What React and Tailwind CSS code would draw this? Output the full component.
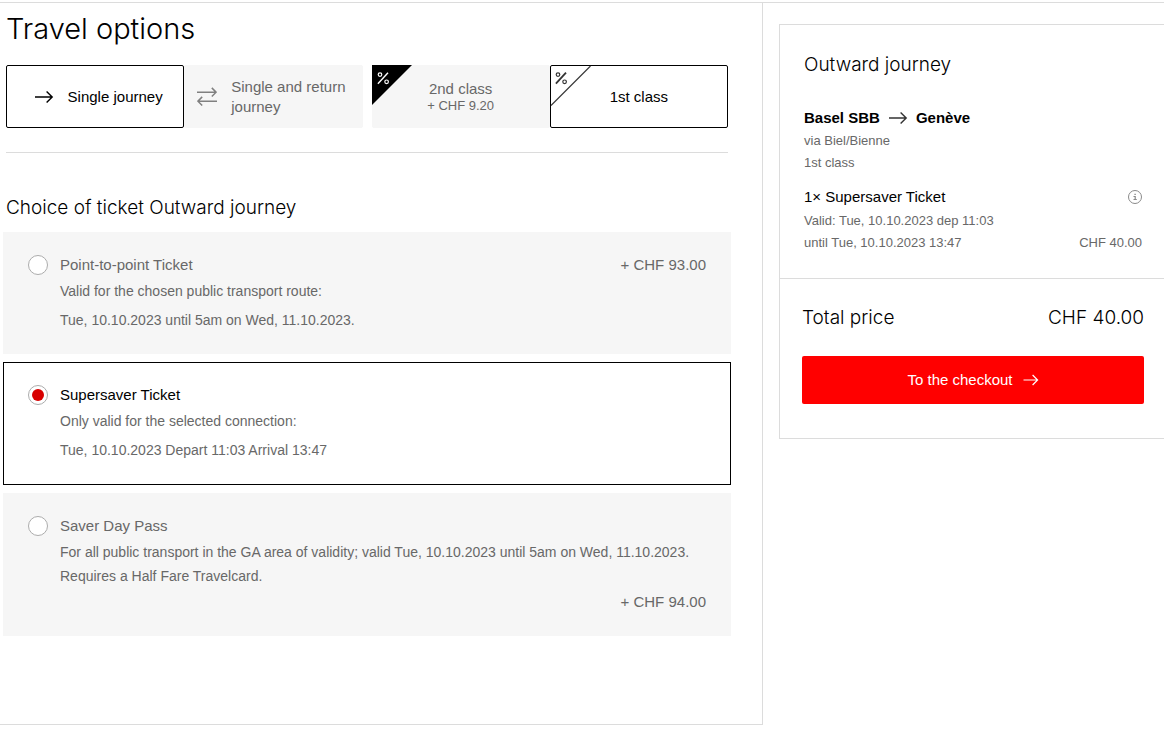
import { useState } from "react";

function ArrowRight({ className = "", strokeWidth = 1.4 }) {
  return (
    <svg className={className} width="20" height="16" viewBox="0 0 20 16" fill="none" stroke="currentColor" strokeWidth={strokeWidth} aria-hidden="true">
      <path d="M1 8H18.2M12.6 2.4L18.2 8L12.6 13.6" />
    </svg>
  );
}

function SwapArrows() {
  return (
    <svg className="shrink-0" width="20" height="20" viewBox="0 0 20 20" fill="none" stroke="#808080" strokeWidth="1.5" aria-hidden="true">
      <path d="M0 5.2H19M14.8 0.9L19.1 5.2L14.8 9.5" />
      <path d="M20 14.2H1M5.2 9.9L0.9 14.2L5.2 18.5" />
    </svg>
  );
}

function InfoIcon() {
  return (
    <svg width="16" height="16" viewBox="0 0 16 16" fill="none" stroke="#8a8a8a" strokeWidth="1" aria-hidden="true">
      <circle cx="9" cy="8" r="6.5" />
      <path d="M7.5 7.5H9.2V10.5M7.5 10.5H10.8M8.4 5.4H9.8" strokeWidth="1.2" />
    </svg>
  );
}

function PercentCorner({ solid }) {
  return (
    <svg className="absolute -left-px -top-px" width="41" height="41" viewBox="0 0 41 41" fill="none" aria-hidden="true">
      {solid ? <path d="M0 0H40L0 40Z" fill="#000" /> : <path d="M40.5 1L1 40.5" stroke="#333" strokeWidth="1.1" />}
      <g stroke={solid ? "#fff" : "#333"}>
        <path d="M16 7.7L5.9 18.7" strokeWidth={solid ? "1.4" : "1.8"} />
        <circle cx="8" cy="9.6" r="1.8" strokeWidth="1.2" />
        <circle cx="14.6" cy="16.8" r="1.8" strokeWidth="1.2" />
      </g>
    </svg>
  );
}

function Toggle({ selected, onClick, children }) {
  return (
    <button
      type="button"
      aria-pressed={selected}
      onClick={onClick}
      className={
        "relative flex h-[63px] flex-1 items-center rounded-xs border text-[15px] leading-5 " +
        (selected ? "border-black bg-white text-black" : "border-[#f6f6f6] bg-[#f6f6f6] text-[#686868]")
      }
    >
      {children}
    </button>
  );
}

const tickets = [
  {
    id: "point",
    name: "Point-to-point Ticket",
    price: "+ CHF 93.00",
    lines: ["Valid for the chosen public transport route:", "Tue, 10.10.2023 until 5am on Wed, 11.10.2023."],
  },
  {
    id: "supersaver",
    name: "Supersaver Ticket",
    lines: ["Only valid for the selected connection:", "Tue, 10.10.2023 Depart 11:03 Arrival 13:47"],
  },
  {
    id: "daypass",
    name: "Saver Day Pass",
    priceBelow: "+ CHF 94.00",
    lines: [
      "For all public transport in the GA area of validity; valid Tue, 10.10.2023 until 5am on Wed, 11.10.2023. Requires a Half Fare Travelcard.",
    ],
  },
];

function TicketCard({ ticket, selected, onSelect }) {
  return (
    <label
      htmlFor={ticket.id}
      className={
        "flex gap-3 border px-6 pt-5 " +
        (selected ? "border-black bg-white pb-[22px]" : "border-[#f6f6f6] bg-[#f6f6f6] pb-[21px]")
      }
    >
      <input
        id={ticket.id}
        type="radio"
        name="ticket"
        checked={selected}
        onChange={onSelect}
        className="mt-0.5 flex size-5 shrink-0 appearance-none items-center justify-center rounded-full border border-[#acacac] bg-white checked:before:size-3 checked:before:rounded-full checked:before:bg-[#d80000] checked:before:content-['']"
      />
      <span className="flex flex-1 flex-col leading-6 text-[#686868]">
        <span className="flex justify-between text-[15px]">
          <span className={selected ? "text-black" : ""}>{ticket.name}</span>
          {ticket.price && <span>{ticket.price}</span>}
        </span>
        <span className="mt-0.5 flex flex-col gap-[5px] text-sm leading-6">
          {ticket.lines.map((line) => (
            <span key={line}>{line}</span>
          ))}
        </span>
        {ticket.priceBelow && <span className="mt-0.5 text-right text-[15px]">{ticket.priceBelow}</span>}
      </span>
    </label>
  );
}

export default function App() {
  const [journey, setJourney] = useState("single");
  const [travelClass, setTravelClass] = useState("first");
  const [ticket, setTicket] = useState("supersaver");

  return (
    <div className="bg-white pt-0.5 font-['Liberation_Sans',Arial,sans-serif] text-black">
      <div className="flex items-start border-t border-[#dcdcdc]">
        <main className="min-w-0 flex-1 border-r border-b border-[#dcdcdc] pr-[31px] pb-22 pl-[3px]">
          <div className="px-[3px]">
            <h1 className="pt-1.5 font-['Inter',sans-serif] text-[29px] leading-10 font-light">Travel options</h1>
            <div className="mt-4 grid grid-cols-2 gap-[9px]">
              <div role="group" aria-label="Journey type" className="flex">
                <Toggle selected={journey === "single"} onClick={() => setJourney("single")}>
                  <span className="flex w-full items-center justify-center gap-3.5 pl-1.5">
                    <ArrowRight />
                    Single journey
                  </span>
                </Toggle>
                <Toggle selected={journey === "return"} onClick={() => setJourney("return")}>
                  <span className="flex w-full items-center gap-3.5 pl-3 text-left">
                    <SwapArrows />
                    Single and return journey
                  </span>
                </Toggle>
              </div>
              <div role="group" aria-label="Travel class" className="flex">
                <Toggle selected={travelClass === "second"} onClick={() => setTravelClass("second")}>
                  <PercentCorner solid />
                  <span className="flex w-full flex-col items-center">
                    <span className="leading-[18px]">2nd class</span>
                    <span className="text-[13px] leading-4">+ CHF 9.20</span>
                  </span>
                </Toggle>
                <Toggle selected={travelClass === "first"} onClick={() => setTravelClass("first")}>
                  <PercentCorner />
                  <span className="w-full text-center">1st class</span>
                </Toggle>
              </div>
            </div>
            <hr className="mt-6 border-[#dcdcdc]" />
            <h2 className="mt-[39px] font-['Inter',sans-serif] text-[19px] leading-8 font-light">Choice of ticket Outward journey</h2>
          </div>
          <div role="radiogroup" aria-label="Choice of ticket" className="mt-2 flex flex-col gap-2">
            {tickets.map((t) => (
              <TicketCard key={t.id} ticket={t} selected={ticket === t.id} onSelect={() => setTicket(t.id)} />
            ))}
          </div>
        </main>

        <aside className="mt-[21px] ml-4 w-[385px] border-y border-l border-[#dcdcdc]">
          <section className="border-b border-[#dcdcdc] pt-6 pr-[22px] pb-6 pl-6">
            <h2 className="font-['Inter',sans-serif] text-[19px] leading-8 font-light">Outward journey</h2>
            <p className="mt-[25px] flex items-center gap-2 text-[15px] leading-6 font-bold">
              Basel SBB
              <ArrowRight className="text-[#333]" />
              Genève
            </p>
            <p className="text-[13px] leading-[22px] text-[#686868]">via Biel/Bienne</p>
            <p className="text-[13px] leading-[22px] text-[#686868]">1st class</p>
            <div className="mt-[11px] mb-px flex items-center justify-between text-[15px] leading-6">
              <h3>1× Supersaver Ticket</h3>
              <button type="button" aria-label="Ticket information">
                <InfoIcon />
              </button>
            </div>
            <div className="flex items-end justify-between text-[13px] leading-[22px] text-[#686868]">
              <p>
                Valid: Tue, 10.10.2023 dep 11:03
                <br />
                until Tue, 10.10.2023 13:47
              </p>
              <p>CHF 40.00</p>
            </div>
          </section>
          <section className="pt-[23px] pr-5 pb-[34px] pl-[22px]">
            <div className="flex justify-between font-['Inter',sans-serif] text-[19px] leading-8 font-light">
              <span>Total price</span>
              <span>CHF 40.00</span>
            </div>
            <button type="button" className="mt-[22px] flex h-12 w-full items-center justify-center gap-2.5 rounded-xs bg-[#ff0000] text-[15px] text-white">
              To the checkout
              <svg width="16" height="14" viewBox="0 0 16 14" fill="none" stroke="currentColor" strokeWidth="1.2" aria-hidden="true">
                <path d="M0.5 7H14.6M9.6 2L14.6 7L9.6 12" />
              </svg>
            </button>
          </section>
        </aside>
      </div>
    </div>
  );
}
